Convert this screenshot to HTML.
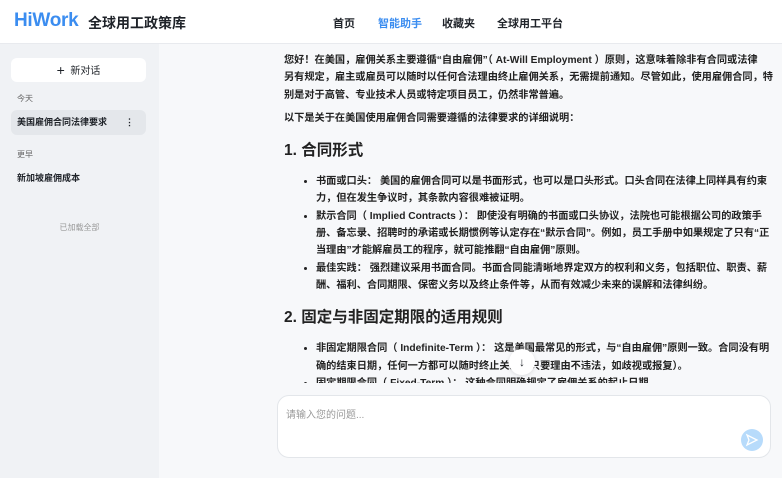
<!DOCTYPE html>
<html><head><meta charset="utf-8"><style>
*{margin:0;padding:0;box-sizing:border-box}
body{width:782px;height:478px;overflow:hidden;background:#f7f8fa;font-family:"Liberation Sans","Noto Sans CJK SC",sans-serif;color:#1f2329;position:relative}
.hdr{position:absolute;left:0;top:0;width:782px;height:44px;background:#fff;border-bottom:1px solid #e8eaee}
.logo{position:absolute;left:14px;top:10px;font-size:19px;font-weight:bold;color:#3b8df0;letter-spacing:-0.3px}
.title{position:absolute;left:88px;top:13px;font-size:14px;font-weight:bold}
.nav{position:absolute;top:15px;font-size:11px;font-weight:bold}
.side{position:absolute;left:0;top:44px;width:159px;height:434px;background:#f0f2f5}
.btn{position:absolute;left:11px;top:58px;width:135px;height:24px;background:#fff;border-radius:6px;font-size:10px;text-align:center;line-height:24px}
.lbl{position:absolute;left:17px;font-size:8px;color:#666}
.item{position:absolute;left:11px;width:135px;height:25px;border-radius:6px;font-size:9px;font-weight:bold;line-height:25px;padding-left:6px}
.main{position:absolute;left:284px;top:52px;width:495px;height:331px;overflow:hidden;font-size:10.2px;font-weight:bold;line-height:17.3px;color:#222;letter-spacing:0;white-space:nowrap}
.main p{margin-bottom:6px}
.main h2{font-size:15.5px;line-height:20px;margin:14px 0 12px;color:#222}
.main ul{padding-left:32px;margin-bottom:3px}
.input{position:absolute;left:277px;top:395px;width:494px;height:63px;background:#fff;border:1px solid #e3e6ea;border-radius:12px}
.ph{position:absolute;left:8px;top:10px;font-size:10px;color:#999}
.send{position:absolute;right:7px;top:33px;width:22px;height:22px;border-radius:50%;background:#b7dbfb}
.dn{position:absolute;left:509px;top:349px;width:26px;height:26px;border-radius:50%;background:#fff;box-shadow:0 1px 4px rgba(0,0,0,.12);text-align:center;font-size:12px;line-height:26px;font-weight:bold}
</style></head><body>
<div class="hdr">
<div class="logo">HiWork</div>
<div class="title">全球用工政策库</div>
<div class="nav" style="left:333px">首页</div>
<div class="nav" style="left:378px;color:#3b8df0">智能助手</div>
<div class="nav" style="left:442px">收藏夹</div>
<div class="nav" style="left:497px">全球用工平台</div>
</div>
<div class="side"></div>
<div class="btn"><span style="font-size:14px;vertical-align:-1px">+</span>&nbsp; 新对话</div>
<div class="lbl" style="top:93px">今天</div>
<div class="item" style="top:110px;background:#e4e7eb">美国雇佣合同法律要求<span style="position:absolute;right:12px">⋮</span></div>
<div class="lbl" style="top:149px">更早</div>
<div class="item" style="top:166px">新加坡雇佣成本</div>
<div class="lbl" style="top:222px;left:0;width:159px;text-align:center;color:#999">已加载全部</div>
<div class="main">
<p>您好！在美国，雇佣关系主要遵循“自由雇佣”（ At-Will Employment ）原则，这意味着除非有合同或法律<br>另有规定，雇主或雇员可以随时以任何合法理由终止雇佣关系，无需提前通知。尽管如此，使用雇佣合同，特<br>别是对于高管、专业技术人员或特定项目员工，仍然非常普遍。</p>
<p>以下是关于在美国使用雇佣合同需要遵循的法律要求的详细说明：</p>
<h2>1. 合同形式</h2>
<ul>
<li>书面或口头： 美国的雇佣合同可以是书面形式，也可以是口头形式。口头合同在法律上同样具有约束<br>力，但在发生争议时，其条款内容很难被证明。</li>
<li>默示合同（ Implied Contracts ）： 即使没有明确的书面或口头协议，法院也可能根据公司的政策手<br>册、备忘录、招聘时的承诺或长期惯例等认定存在“默示合同”。例如，员工手册中如果规定了只有“正<br>当理由”才能解雇员工的程序，就可能推翻“自由雇佣”原则。</li>
<li>最佳实践： 强烈建议采用书面合同。书面合同能清晰地界定双方的权利和义务，包括职位、职责、薪<br>酬、福利、合同期限、保密义务以及终止条件等，从而有效减少未来的误解和法律纠纷。</li>
</ul>
<h2>2. 固定与非固定期限的适用规则</h2>
<ul>
<li>非固定期限合同（ Indefinite-Term ）： 这是美国最常见的形式，与“自由雇佣”原则一致。合同没有明<br>确的结束日期，任何一方都可以随时终止关系（只要理由不违法，如歧视或报复）。</li>
<li>固定期限合同（ Fixed-Term ）： 这种合同明确规定了雇佣关系的起止日期。</li>
</ul>
</div>
<div class="dn">↓</div>
<div class="input"><div class="ph">请输入您的问题...</div><div class="send"><svg width="22" height="22" viewBox="0 0 22 22"><path d="M6 6 L16 11 L6 16 L8 11 Z" fill="none" stroke="#fff" stroke-width="1.3"/></svg></div></div>
</body></html>
